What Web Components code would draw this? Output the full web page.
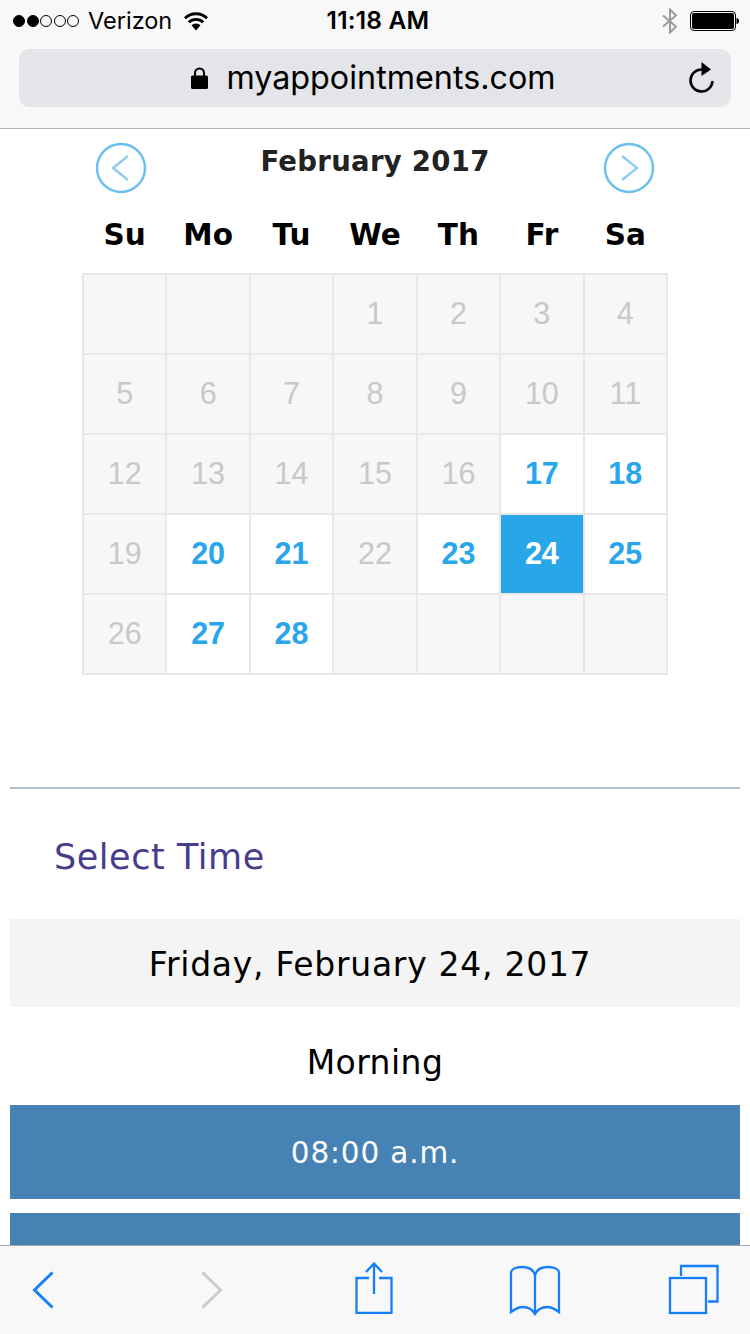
<!DOCTYPE html>
<html lang="en">
<head>
<meta charset="utf-8">
<title>myappointments.com</title>
<style>
  html, body { margin: 0; padding: 0; background: #fff; }
  body { width: 750px; height: 1334px; overflow: hidden; position: relative; font-family: "DejaVu Sans", sans-serif; }
</style>
</head>
<body>
<browser-top url="myappointments.com"></browser-top>
<month-nav>February 2017</month-nav>
<month-calendar></month-calendar>
<time-panel heading="Select Time" date="Friday, February 24, 2017" part-of-day="Morning">
  <time-slot>08:00 a.m.</time-slot>
  <time-slot></time-slot>
</time-panel>
<browser-bottom></browser-bottom>

<script>
class BrowserTop extends HTMLElement {
  connectedCallback() {
    const root = this.attachShadow({ mode: 'open' });
    const url = this.getAttribute('url');
    root.innerHTML = `
      <style>
        :host { display: block; height: 128px; background: #f8f8f8; border-bottom: 1px solid #b2b2b2; font-family: "Inter", "Liberation Sans", sans-serif; color: #000; }
        .status { height: 41px; display: flex; align-items: center; padding: 0 11px 0 13px; font-size: 23.500px; }
        .left, .right { flex: 1; display: flex; align-items: center; }
        .right { justify-content: flex-end; }
        .dots { display: flex; gap: 1.500px; margin-right: 9px; }
        .dots i { width: 12px; height: 12px; border-radius: 50%; border: 1px solid #000; box-sizing: border-box; }
        .dots i.on { background: #000; }
        .wifi { margin-left: 11px; }
        .time { font-weight: 600; font-size: 24.500px; letter-spacing: .2px; margin-left: 4px; padding-bottom: 2px; }
        .bt { margin-right: 11px; }
        .url { margin: 8px 19px 0; padding-right: 3px; height: 58px; background: #e4e5e8; border-radius: 11px; display: flex; align-items: center; justify-content: center; position: relative; font-size: 32.300px; }
        .url span { margin-left: 18px; padding-bottom: 2px; }
        .reload { position: absolute; right: 16px; top: 12px; }
      </style>
      <div class="status">
        <div class="left">
          <div class="dots"><i class="on"></i><i class="on"></i><i></i><i></i><i></i></div>
          Verizon
          <svg class="wifi" width="26" height="20" viewBox="0 0 26 20"><path d="M13 19.500 8.500 14.300a6.500 6.500 0 0 1 9 0Z" fill="#000"/><path d="M5.800 11.300a10.300 10.300 0 0 1 14.400 0M2 7.200a15.800 15.800 0 0 1 22 0" fill="none" stroke="#000" stroke-width="2.800"/></svg>
        </div>
        <div class="time">11:18 AM</div>
        <div class="right">
          <svg class="bt" width="18" height="26" viewBox="0 0 18 26"><path d="M2 7.500 15 18.500 9 24.500V1.500L15 7.500 2 18.500" fill="none" stroke="#9b9b9b" stroke-width="2"/></svg>
          <svg width="49" height="20" viewBox="0 0 49 20"><rect x=".5" y=".5" width="45" height="19" rx="3.5" fill="none" stroke="#000"/><rect x="2" y="2" width="42" height="16" rx="2" fill="#000"/><path d="M46.500 7c1.500 0 2.500 1 2.500 3s-1 3-2.500 3Z" fill="#000"/></svg>
        </div>
      </div>
      <div class="url">
        <svg width="17" height="22" viewBox="0 0 17 22"><path d="M4 9V6a4.500 4.500 0 0 1 9 0v3" fill="none" stroke="#000" stroke-width="2"/><rect y="8.500" width="17" height="13.500" rx="1.500" fill="#000"/></svg>
        <span>${url}</span>
        <svg class="reload" width="28" height="32" viewBox="0 0 28 32"><path d="M15 8.500a11 11 0 1 0 10.500 11.500" fill="none" stroke="#000" stroke-width="2.600"/><path d="M14.500 1 24 8.500 14.500 15Z" fill="#000"/></svg>
      </div>`;
  }
}

class MonthNav extends HTMLElement {
  connectedCallback() {
    const root = this.attachShadow({ mode: 'open' });
    const circle = (d) => `
      <svg width="52" height="52" viewBox="0 0 52 52">
        <circle cx="26" cy="26" r="24" fill="#fff" stroke="#6cc0ee" stroke-width="2.500"/>
        <path d="${d}" fill="none" stroke="#8fcdf0" stroke-width="2.500"/>
      </svg>`;
    root.innerHTML = `
      <style>
        :host { display: flex; justify-content: space-between; height: 67px; box-sizing: border-box; padding: 13px 95px 0; font-family: "DejaVu Sans", sans-serif; }
        .title { font-size: 27.500px; font-weight: 700; color: #222; line-height: 38px; letter-spacing: .3px; }
      </style>
      ${circle('M33 14 18 26l15 12')}
      <div class="title"><slot></slot></div>
      ${circle('M19 14 34 26 19 38')}`;
  }
}

class MonthCalendar extends HTMLElement {
  connectedCallback() {
    const root = this.attachShadow({ mode: 'open' });
    const heads = ['Su', 'Mo', 'Tu', 'We', 'Th', 'Fr', 'Sa'];
    const open = [17, 18, 20, 21, 23, 25, 27, 28];
    const cells = [];
    for (let i = 0; i < 3; i++) cells.push('<div class="c"></div>');
    for (let d = 1; d <= 28; d++) {
      let cls = 'c';
      if (d === 24) cls += ' sel';
      else if (open.includes(d)) cls += ' open';
      cells.push(`<div class="${cls}">${d}</div>`);
    }
    for (let i = 0; i < 4; i++) cells.push('<div class="c"></div>');
    root.innerHTML = `
      <style>
        :host { display: block; width: 586px; margin: 0 0 0 82px; }
        .heads, .grid { display: grid; grid-template-columns: repeat(7, 1fr); gap: 2px; padding: 0 2px; }
        .heads { height: 77px; font: 700 29.500px/78px "DejaVu Sans", sans-serif; color: #000; text-align: center; }
        .grid { grid-auto-rows: 78px; background: #e8e8e8; padding: 2px; font: 30.500px "Liberation Sans", Arial, sans-serif; }
        .c { background: #f7f7f7; color: #c8c8c8; display: flex; align-items: center; justify-content: center; padding-bottom: 2px; box-sizing: border-box; }
        .open { background: #fff; color: #29a6ea; font-weight: 700; }
        .sel { background: #29a6ea; color: #fff; font-weight: 700; }
      </style>
      <div class="heads">${heads.map((h) => `<div>${h}</div>`).join('')}</div>
      <div class="grid">${cells.join('')}</div>`;
  }
}

class TimePanel extends HTMLElement {
  connectedCallback() {
    const root = this.attachShadow({ mode: 'open' });
    root.innerHTML = `
      <style>
        :host { display: block; margin: 112px 10px 0; border-top: 2px solid #b0c0d0; font-family: "DejaVu Sans", sans-serif; }
        h2 { margin: 0; padding: 0 0 0 44px; height: 130px; box-sizing: border-box; font-weight: 400; font-size: 35px; line-height: 137px; letter-spacing: .55px; color: #483d8b; }
        .date { height: 88px; padding-right: 10px; background: #f4f4f4; color: #000; text-align: center; font-size: 33px; line-height: 92px; letter-spacing: .72px; }
        .part { height: 98px; text-align: center; color: #000; font-size: 33px; line-height: 112px; letter-spacing: .45px; }
        .slots { display: flex; flex-direction: column; gap: 14px; }
      </style>
      <h2>${this.getAttribute('heading')}</h2>
      <div class="date">${this.getAttribute('date')}</div>
      <div class="part">${this.getAttribute('part-of-day')}</div>
      <div class="slots"><slot></slot></div>`;
  }
}

class TimeSlot extends HTMLElement {
  connectedCallback() {
    const root = this.attachShadow({ mode: 'open' });
    root.innerHTML = `
      <style>
        :host { display: block; height: 94px; background: #4682b4; color: #fff; text-align: center; font: 29.500px/96px "DejaVu Sans", sans-serif; letter-spacing: .85px; }
      </style>
      <slot></slot>`;
  }
}

class BrowserBottom extends HTMLElement {
  connectedCallback() {
    const root = this.attachShadow({ mode: 'open' });
    const blue = '#157efb';
    root.innerHTML = `
      <style>
        /* sits over the page, like the real toolbar */
        :host { position: absolute; left: 0; right: 0; bottom: 0; height: 88px; background: #f8f8f8; border-top: 1px solid #a8a8a8; display: block; }
        .bar { height: 100%; display: flex; align-items: flex-start; padding-left: 32px; }
        svg { display: block; flex: none; fill: none; stroke: ${blue}; stroke-width: 2.300; }
        .nav { stroke-width: 3; margin-top: 24px; }
      </style>
      <div class="bar">
        <svg class="nav" width="22" height="40" viewBox="0 0 22 40"><path d="M20.500 2.500 2.500 20l18 17.500"/></svg>
        <svg class="nav" width="22" height="40" viewBox="0 0 22 40" style="margin-left:147px;stroke:#cbcbcb"><path d="M1.500 2.500 19.500 20l-18 17.500"/></svg>
        <svg width="38" height="52" viewBox="0 0 38 52" style="margin-left:132px;margin-top:16px"><path d="M14 16H1.500v35h35V16H24M19 32V2M11 10l8-8.500L27 10"/></svg>
        <svg width="52" height="52" viewBox="0 0 52 52" style="margin-left:116px;margin-top:18px"><path d="M2 48V9C2 5 7 3 13 3c7 0 12 3 13 9 1-6 6-9 13-9 6 0 11 2 11 6v39c-4-3-8-5-12-5-5 0-9 2-12 7-3-5-7-7-12-7-4 0-8 2-12 5ZM26 12v37"/></svg>
        <svg width="52" height="52" viewBox="0 0 52 52" style="margin-left:107px;margin-top:18px"><path d="M13 12V2h36.500v35.500H40"/><rect x="2" y="14" width="36" height="35"/></svg>
      </div>`;
  }
}

customElements.define('browser-top', BrowserTop);
customElements.define('month-nav', MonthNav);
customElements.define('month-calendar', MonthCalendar);
customElements.define('time-panel', TimePanel);
customElements.define('time-slot', TimeSlot);
customElements.define('browser-bottom', BrowserBottom);
</script>
</body>
</html>
